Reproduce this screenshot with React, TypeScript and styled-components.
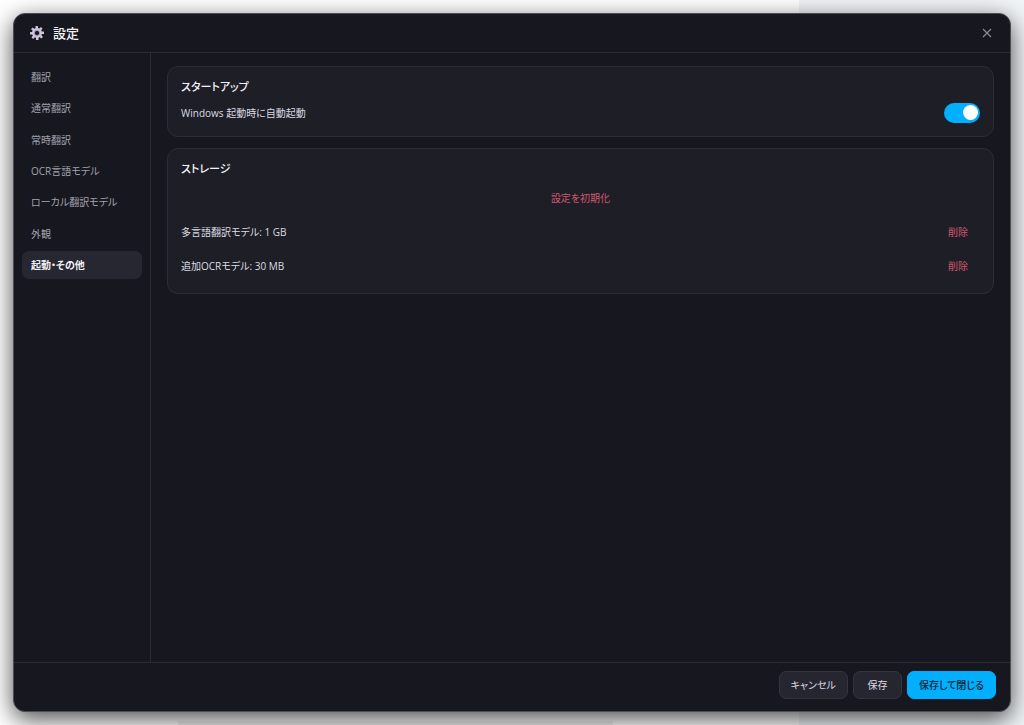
import React from "react";
import styled, { createGlobalStyle, css } from "styled-components";

const GlobalStyle = createGlobalStyle`
  *, *::before, *::after { box-sizing: border-box; }
  html, body, #root { height: 100%; }
  body {
    margin: 0;
    overflow: hidden;
    font-family: "Open Sans", "Noto Sans CJK JP", sans-serif;
    font-feature-settings: "palt";
    font-size: 10px;
    line-height: 16px;
    color: #dcdce2;
    background:
      linear-gradient(#f2f2f2, #f2f2f2) 178px 100% / 435px 4px no-repeat,
      linear-gradient(90deg, #ffffff 0 799px, #f0f4f7 799px);
  }
  button {
    font: inherit;
    font-feature-settings: inherit;
    color: inherit;
    cursor: pointer;
  }
`;

const Desktop = styled.div`
  height: 100%;
  padding: 13px;
`;

const Window = styled.main`
  display: flex;
  flex-direction: column;
  height: 100%;
  overflow: hidden;
  border: 1px solid #4c4c53;
  border-radius: 12px;
  background: #17171f;
  box-shadow: 0 7px 24px rgba(0, 0, 0, 0.7);
`;

const Header = styled.header`
  display: flex;
  align-items: center;
  gap: 9px;
  height: 39px;
  padding: 0 16px;
  border-bottom: 1px solid #2b2b34;
`;

const Title = styled.h1`
  flex: 1;
  margin: 0;
  font-size: 13px;
  font-weight: 500;
  color: #f4f4f8;
`;

const CloseButton = styled.button`
  display: flex;
  padding: 2px;
  border: 0;
  background: none;
  color: #8c8c96;
`;

const Body = styled.div`
  display: flex;
  flex: 1;
  min-height: 0;
`;

const Nav = styled.nav`
  flex: 0 0 137px;
  padding: 10px 8px;
  border-right: 1px solid #2b2b34;
`;

const NavList = styled.ul`
  display: flex;
  flex-direction: column;
  justify-content: space-between;
  min-height: 216px;
  margin: 0;
  padding: 0;
  list-style: none;
`;

const NavButton = styled.button<{ $active: boolean }>`
  display: block;
  width: 100%;
  height: 28px;
  padding: 0 9px;
  border: 0;
  border-radius: 7px;
  background: none;
  text-align: left;
  color: #a2a2ae;
  ${(p) =>
    p.$active &&
    css`
      background: #272731;
      color: #f0f0f5;
      font-weight: 600;
    `}
`;

const Content = styled.div`
  display: flex;
  flex: 1;
  flex-direction: column;
  gap: 11px;
  padding: 13px 16px;
  overflow: auto;
`;

const Card = styled.section`
  display: flex;
  flex-direction: column;
  padding: 12px 13px 13px;
  border: 1px solid #2d2d37;
  border-radius: 11px;
  background: #1e1e27;
`;

const CardTitle = styled.h2`
  margin: 0 0 7px;
  font-size: 11px;
  font-weight: 500;
  line-height: 16px;
  color: #f4f4f8;
`;

const SwitchRow = styled.label`
  display: flex;
  align-items: center;
  justify-content: space-between;
  height: 21px;
`;

const Switch = styled.input`
  appearance: none;
  display: flex;
  align-items: center;
  width: 36px;
  height: 20px;
  margin: 0;
  padding: 0 2px;
  border-radius: 10px;
  background: #3a3a46;
  cursor: pointer;
  &::before {
    content: "";
    width: 15px;
    height: 15px;
    border-radius: 50%;
    background: #ffffff;
  }
  &:checked {
    justify-content: flex-end;
    background: #00b0ff;
  }
`;

const StorageRows = styled.div`
  display: grid;
  gap: 6px;
`;

const StorageRow = styled.div`
  display: flex;
  align-items: center;
  justify-content: space-between;
`;

const DangerButton = styled.button`
  height: 28px;
  padding: 0 12px;
  border: 0;
  background: none;
  color: #d0586e;
`;

const Footer = styled.footer`
  display: flex;
  align-items: center;
  justify-content: flex-end;
  gap: 5px;
  height: 49px;
  padding: 0 14px 4px;
  border-top: 1px solid #2b2b34;
`;

const FooterButton = styled.button<{ $primary?: boolean }>`
  min-width: 49px;
  height: 28px;
  padding: 0 11px;
  border: 1px solid #34343f;
  border-radius: 7px;
  background: #262630;
  color: #dcdce2;
  ${(p) =>
    p.$primary &&
    css`
      border-color: #00b0ff;
      background: #00b0ff;
      color: #10202c;
      font-weight: 500;
    `}
`;

const GearIcon = () => (
  <svg width="14" height="14" viewBox="0 0 28 28" aria-hidden="true">
    <g fill="#cdc3da">
      {[0, 45, 90, 135, 180, 225, 270, 315].map((angle) => (
        <rect key={angle} x="11" y="0" width="5" height="8" rx="1" transform={`rotate(${angle} 14 14)`} />
      ))}
    </g>
    <circle cx="14" cy="14" r="7" fill="none" stroke="#cdc3da" strokeWidth="6" />
    <circle cx="14" cy="14" r="5" fill="none" stroke="#9a8fab" strokeWidth="2" />
    <circle cx="14" cy="14" r="4" fill="#17171f" />
  </svg>
);

const CloseIcon = () => (
  <svg width="10" height="10" viewBox="0 0 10 10" aria-hidden="true">
    <path d="M1 1L9 9M9 1L1 9" stroke="currentColor" strokeWidth="1.1" fill="none" />
  </svg>
);

const sections = [
  "翻訳",
  "通常翻訳",
  "常時翻訳",
  "OCR言語モデル",
  "ローカル翻訳モデル",
  "外観",
  "起動・その他",
];

const models = [
  { name: "多言語翻訳モデル", size: "1 GB" },
  { name: "追加OCRモデル", size: "30 MB" },
];

export default function App() {
  const [active, setActive] = React.useState("起動・その他");
  const [autoStart, setAutoStart] = React.useState(true);

  return (
    <>
      <GlobalStyle />
      <Desktop>
        <Window lang="ja">
          <Header>
            <GearIcon />
            <Title>設定</Title>
            <CloseButton type="button" aria-label="閉じる">
              <CloseIcon />
            </CloseButton>
          </Header>
          <Body>
            <Nav>
              <NavList>
                {sections.map((name) => (
                  <li key={name}>
                    <NavButton type="button" $active={name === active} onClick={() => setActive(name)}>
                      {name}
                    </NavButton>
                  </li>
                ))}
              </NavList>
            </Nav>
            <Content>
              <Card>
                <CardTitle>スタートアップ</CardTitle>
                <SwitchRow>
                  Windows 起動時に自動起動
                  <Switch
                    type="checkbox"
                    role="switch"
                    checked={autoStart}
                    onChange={(e) => setAutoStart(e.target.checked)}
                  />
                </SwitchRow>
              </Card>
              <Card>
                <CardTitle>ストレージ</CardTitle>
                <StorageRows>
                  <DangerButton type="button">設定を初期化</DangerButton>
                  {models.map((model) => (
                    <StorageRow key={model.name}>
                      <span>{`${model.name}: ${model.size}`}</span>
                      <DangerButton type="button">削除</DangerButton>
                    </StorageRow>
                  ))}
                </StorageRows>
              </Card>
            </Content>
          </Body>
          <Footer>
            <FooterButton type="button">キャンセル</FooterButton>
            <FooterButton type="button">保存</FooterButton>
            <FooterButton type="button" $primary>
              保存して閉じる
            </FooterButton>
          </Footer>
        </Window>
      </Desktop>
    </>
  );
}
